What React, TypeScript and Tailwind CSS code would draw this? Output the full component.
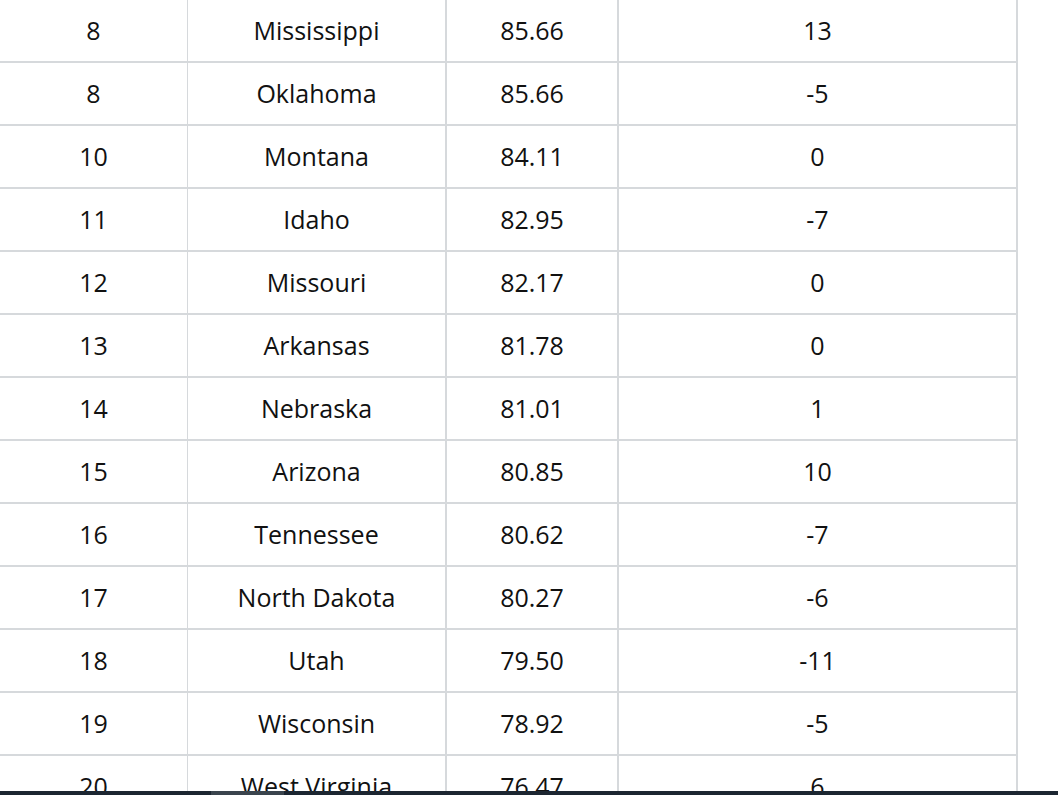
import React from "react";

const rows: [string, string, string, string][] = [
  ["8", "Mississippi", "85.66", "13"],
  ["8", "Oklahoma", "85.66", "-5"],
  ["10", "Montana", "84.11", "0"],
  ["11", "Idaho", "82.95", "-7"],
  ["12", "Missouri", "82.17", "0"],
  ["13", "Arkansas", "81.78", "0"],
  ["14", "Nebraska", "81.01", "1"],
  ["15", "Arizona", "80.85", "10"],
  ["16", "Tennessee", "80.62", "-7"],
  ["17", "North Dakota", "80.27", "-6"],
  ["18", "Utah", "79.50", "-11"],
  ["19", "Wisconsin", "78.92", "-5"],
  ["20", "West Virginia", "76.47", "6"],
];

export default function App() {
  return (
    <div
      className="relative h-[795px] w-[1058px] overflow-hidden bg-white text-[#111111]"
      style={{ fontFamily: '"Open Sans", "Liberation Sans", sans-serif' }}
    >
      <div className="w-[1018px] border-r-2 border-[#d6d9dc]">
        {rows.map((r, i) => (
          <div key={i} className="flex h-[63px] border-b-2 border-[#d6d9dc] text-[25px]">
            <div className="flex w-[188px] items-center justify-center border-r border-[#d6d9dc]">
              {r[0]}
            </div>
            <div className="flex w-[259px] items-center justify-center border-r-2 border-[#d6d9dc]">
              {r[1]}
            </div>
            <div className="flex w-[172px] items-center justify-center border-r-2 border-[#d6d9dc]">
              {r[2]}
            </div>
            <div className="flex flex-1 items-center justify-center">{r[3]}</div>
          </div>
        ))}
      </div>
      <div className="absolute bottom-0 left-0 h-[4px] w-full bg-[#1c2631]">
        <div className="ml-[211px] h-full w-[73px] bg-[#3a444d]" />
      </div>
    </div>
  );
}
